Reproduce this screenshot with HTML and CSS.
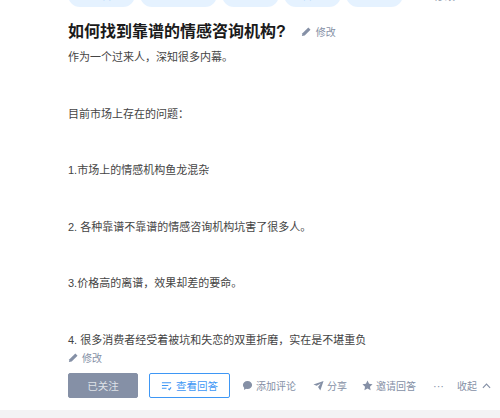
FILE: index.html
```html
<!DOCTYPE html>
<html lang="zh-CN">
<head>
    <meta charset="UTF-8">
    <title>如何找到靠谱的情感咨询机构?</title>
    <link rel="stylesheet" href="styles.css">
</head>
<body>

<div class="question">
    <!-- 话题标签，上半部分滚出了屏幕 -->
    <div class="tags">
        <span class="tag tag-1">情感咨询</span>
        <span class="tag tag-2">情感机构推荐</span>
        <span class="tag tag-3">情感</span>
        <span class="tag tag-3">咨询</span>
        <span class="tag tag-3">机构</span>
        <span class="tag-edit">
            <svg class="icon" viewBox="0 0 12 12"><path d="M1 11l.6-3L8 1.6 10.400 4 4 10.400z"/></svg>
            修改
        </span>
    </div>

    <div class="title-row">
        <h1>如何找到靠谱的情感咨询机构?</h1>
        <span class="edit-link">
            <svg class="icon" viewBox="0 0 12 12"><path d="M1 11l.6-3L8 1.6 10.400 4 4 10.400z"/></svg>
            修改
        </span>
    </div>

    <div class="detail">
        <p>作为一个过来人，深知很多内幕。</p>
        <p>目前市场上存在的问题：</p>
        <p>1.市场上的情感机构鱼龙混杂</p>
        <p>2. 各种靠谱不靠谱的情感咨询机构坑害了很多人。</p>
        <p>3.价格高的离谱，效果却差的要命。</p>
        <p>4. 很多消费者经受着被坑和失恋的双重折磨，实在是不堪重负</p>
    </div>

    <div class="edit-detail">
        <svg class="icon" viewBox="0 0 12 12"><path d="M1 11l.6-3L8 1.6 10.400 4 4 10.400z"/></svg>
        修改
    </div>

    <div class="actions">
        <button class="btn-followed">已关注</button>
        <button class="btn-answers">
            <svg class="icon" viewBox="0 0 12 12"><path d="M1 3h10M1 6h7M1 9h5M8 9.500l1.200 1L11 8" fill="none" stroke="#3e97f5" stroke-width="1.200"/></svg>
            查看回答
        </button>
        <span class="action action-comment">
            <svg class="icon" viewBox="0 0 12 12"><path d="M6 1.200c2.900 0 5 1.900 5 4.300s-2.100 4.300-5 4.300c-.6 0-1.100-.1-1.600-.2L2.300 11V8.500C1.500 7.700 1 6.700 1 5.500c0-2.400 2.100-4.300 5-4.300z"/></svg>
            添加评论
        </span>
        <span class="action action-share">
            <svg class="icon" viewBox="0 0 12 12"><path d="M.5 5L11.500 1 8 11.500 5.500 7.500 8.500 3.800 4 6.200z"/></svg>
            分享
        </span>
        <span class="action action-invite">
            <svg class="icon" viewBox="0 0 12 12"><path d="M6 .6l1.700 3.500 3.800.5-2.800 2.700.7 3.900L6 9.300l-3.400 1.900.7-3.900L.5 4.600l3.800-.5z"/></svg>
            邀请回答
        </span>
        <span class="action action-more">···</span>
        <span class="action">
            收起
            <svg class="chevron" viewBox="0 0 10 6"><path d="M1 5l4-4 4 4" fill="none" stroke="#8590a6" stroke-width="1.300"/></svg>
        </span>
    </div>
</div>

<div class="footer-strip"></div>

</body>
</html>
```

FILE: styles.css
```css
* {
    margin: 0;
    padding: 0;
    box-sizing: border-box;
}
html, body {
    height: 418px;
    overflow: hidden;
}
body {
    background: #fff;
    color: #444;
    font-family: "Liberation Sans", "Noto Sans CJK SC", sans-serif;
    font-size: 11px;
    display: flex;
    flex-direction: column;
}
.question {
    flex: 1;
    padding-left: 68px;
}
.icon {
    width: 11px;
    height: 11px;
    fill: #8590a6;
    flex-shrink: 0;
}

/* 标签 */
.tags {
    display: flex;
    align-items: center;
    gap: 5px;
    height: 24px;
    margin-top: -17px;
    font-size: 10.500px;
}
.tag {
    height: 24px;
    line-height: 24px;
    border-radius: 12px;
    background: #e5f2ff;
    color: #3e97f5;
    text-align: center;
}
.tag-1 { width: 67px; }
.tag-2 { width: 77px; }
.tag-3 { width: 57px; }
.tag-edit {
    display: flex;
    align-items: center;
    gap: 4px;
    margin-left: 11px;
    color: #8590a6;
}

/* 标题 */
.title-row {
    display: flex;
    align-items: center;
    margin-top: 11px;
    height: 24px;
}
h1 {
    font-size: 16px;
    font-weight: bold;
    color: #1a1a1a;
}
.edit-link {
    display: flex;
    align-items: center;
    gap: 4px;
    margin-left: 15px;
    margin-top: 3px;
    font-size: 10px;
    color: #8590a6;
}

/* 问题描述 */
.detail {
    margin-top: 6px;
}
.detail p {
    height: 56.600px;
    line-height: 18px;
    white-space: nowrap;
}
.detail p:last-child {
    height: 18px;
}
.edit-detail {
    display: flex;
    align-items: center;
    gap: 3px;
    height: 18px;
    font-size: 10px;
    color: #8590a6;
}

/* 底部操作 */
.actions {
    display: flex;
    align-items: center;
    margin-top: 6px;
    height: 26px;
    font-size: 10px;
    color: #8590a6;
}
.actions button {
    height: 25px;
    font-family: inherit;
    font-size: 10.500px;
    border-radius: 2px;
}
.btn-followed {
    width: 70px;
    background: #8590a6;
    border: 1px solid #8590a6;
    color: #dfe2e8;
}
.btn-answers {
    display: flex;
    align-items: center;
    justify-content: center;
    gap: 4px;
    width: 81px;
    margin-left: 11px;
    background: #fff;
    border: 1px solid #3e97f5;
    color: #3e97f5;
}
.action {
    display: flex;
    align-items: center;
    gap: 3px;
    white-space: nowrap;
}
.action-comment { margin-left: 12px; }
.action-share { margin-left: 17px; }
.action-invite { margin-left: 15px; }
.action-more {
    margin-left: 17px;
    margin-right: 13px;
    font-size: 11px;
}
.chevron {
    width: 9px;
    height: 6px;
    margin-left: 2px;
}
.footer-strip {
    height: 8px;
    background: #f3f3f4;
}
```
